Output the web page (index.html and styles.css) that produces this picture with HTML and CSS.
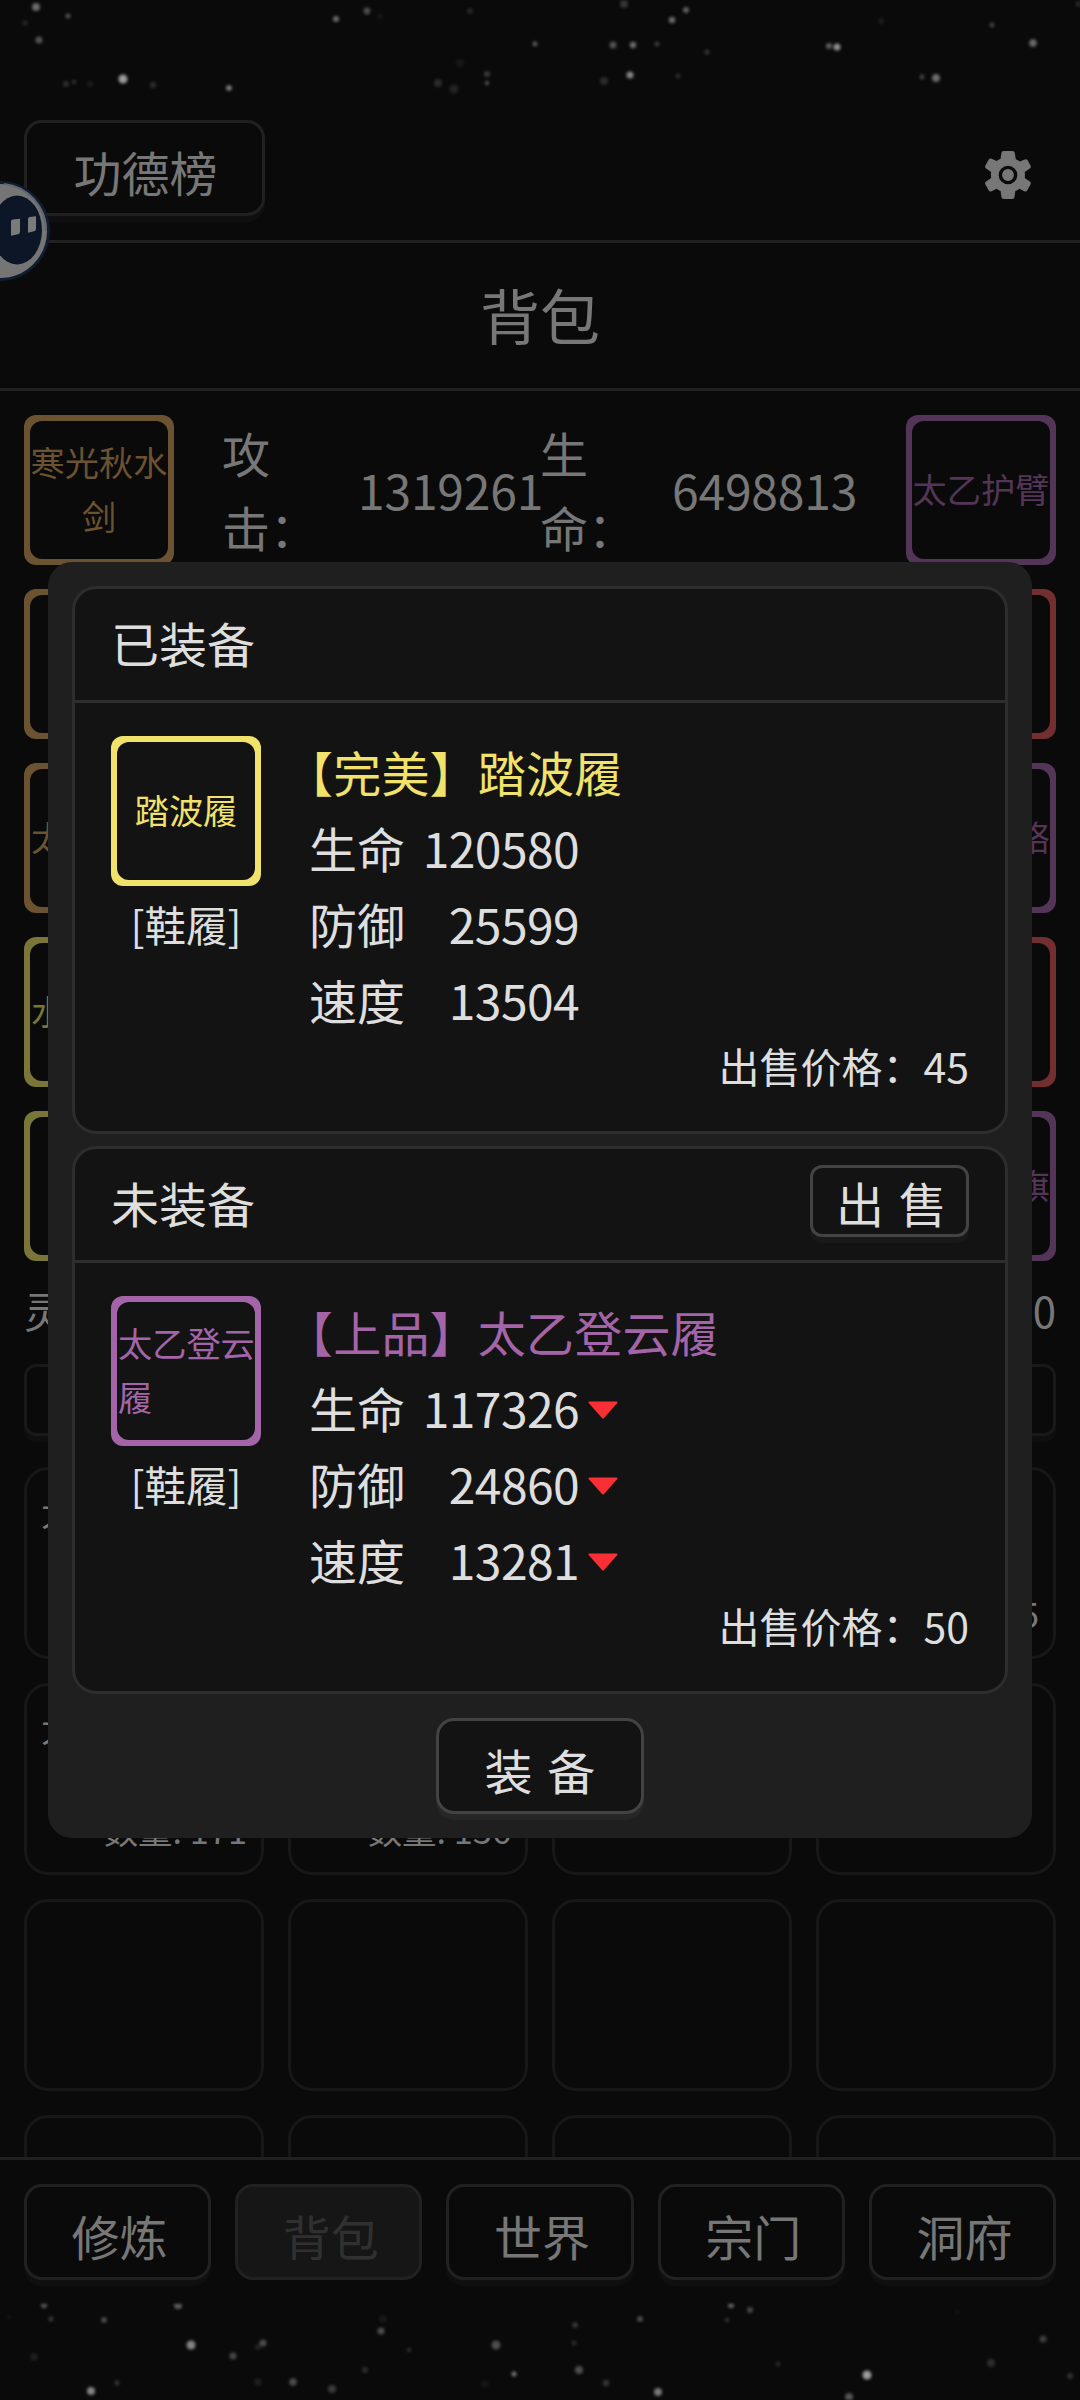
FILE: index.html
```html
<!DOCTYPE html>
<html lang="zh-CN">
<head>
<meta charset="utf-8">
<title>背包</title>
<link rel="stylesheet" href="styles.css">
</head>
<body>
<div class="app">
  <svg class="stars" width="1080" height="96" viewBox="0 0 1080 96" fill="#fff">
    <circle cx="36" cy="7" r="4" opacity=".4"/><circle cx="68" cy="16" r="2.5" opacity=".3"/><circle cx="25" cy="23" r="3" opacity=".1"/>
    <circle cx="39" cy="40" r="3.5" opacity=".3"/><circle cx="123" cy="79" r="4.5" opacity=".6"/><circle cx="66" cy="84" r="3" opacity=".15"/>
    <circle cx="74" cy="82" r="2" opacity=".2"/><circle cx="90" cy="84" r="3" opacity=".08"/><circle cx="153" cy="85" r="3" opacity=".15"/>
    <circle cx="229" cy="88" r="2.8" opacity=".5"/><circle cx="336" cy="19" r="3" opacity=".4"/><circle cx="367" cy="11" r="3.4" opacity=".28"/>
    <circle cx="380" cy="16" r="2.5" opacity=".07"/><circle cx="470" cy="11" r="3" opacity=".12"/><circle cx="535" cy="44" r="2.4" opacity=".35"/>
    <circle cx="460" cy="63" r="4" opacity=".06"/><circle cx="487" cy="74" r="3" opacity=".2"/><circle cx="487" cy="83" r="2" opacity=".35"/>
    <circle cx="438" cy="83" r="4" opacity=".14"/><circle cx="454" cy="89" r="4.5" opacity=".1"/><circle cx="613" cy="45" r="3.5" opacity=".3"/>
    <circle cx="633" cy="45" r="3.2" opacity=".4"/><circle cx="657" cy="44" r="2.5" opacity=".2"/><circle cx="630" cy="75" r="3.5" opacity=".5"/>
    <circle cx="604" cy="81" r="4" opacity=".14"/><circle cx="678" cy="76" r="2.5" opacity=".15"/><circle cx="624" cy="4" r="4" opacity=".18"/>
    <circle cx="686" cy="10" r="3" opacity=".35"/><circle cx="672" cy="20" r="3.2" opacity=".4"/><circle cx="707" cy="52" r="2.6" opacity=".18"/>
    <circle cx="829" cy="46" r="3" opacity=".35"/><circle cx="837" cy="47" r="3.5" opacity=".55"/><circle cx="881" cy="21" r="3" opacity=".08"/>
    <circle cx="992" cy="25" r="2.4" opacity=".25"/><circle cx="1033" cy="43" r="3.8" opacity=".4"/><circle cx="936" cy="78" r="4" opacity=".4"/>
    <circle cx="922" cy="77" r="2.4" opacity=".25"/><circle cx="1079" cy="4" r="3" opacity=".15"/>
  </svg>

  <header class="topbar">
    <button class="btn rank">功德榜</button>
    <svg class="gear" width="46" height="50" viewBox="0 0 46 50">
      <path d="M18.5 1h9q2 0 2.300 2l1 6.200q2 .8 4 2.300l5-2q2-.8 3 1l2.700 5q1 1.800-.7 3l-5 3.500q.3 3 0 6l5 3.500q1.700 1.200.7 3l-3.200 5.700q-1 1.800-3 1l-5-2.400q-1.800 1.500-4 2.300l-.8 6q-.3 2-2.300 2h-8.500q-2 0-2.300-2l-.8-6q-2.200-.8-4-2.300l-5 2.400q-2 .8-3-1l-3.200-5.700q-1-1.800.7-3l5-3.500q-.3-3 0-6l-5-3.500q-1.700-1.200-.7-3l3.200-5.700q1-1.800 3-1l5 2.200q1.800-1.400 4-2.200l.8-5.800q.3-2 2.100-2z" fill="#777"/>
      <circle cx="23" cy="25" r="7.600" fill="#777" stroke="#0a0a0a" stroke-width="3.400"/>
    </svg>
  </header>

  <div class="title">背包</div>

  <main class="main">
    <section class="equip">
      <div class="col">
        <div class="slot gold dim"><span>寒光秋水剑</span></div>
        <div class="slot gold dim"><span></span></div>
        <div class="slot gold dim"><span class="start">太</span></div>
        <div class="slot yellow dim"><span class="start">水</span></div>
        <div class="slot yellow dim"><span></span></div>
      </div>
      <div class="stats">
        <span class="label">攻击：</span><span class="value">1319261</span>
        <span class="label">生命：</span><span class="value">6498813</span>
      </div>
      <div class="col">
        <div class="slot purple dim"><span>太乙护臂</span></div>
        <div class="slot red dim"><span></span></div>
        <div class="slot purple dim"><span class="end">络</span></div>
        <div class="slot red dim"><span></span></div>
        <div class="slot purple dim"><span class="end">旗</span></div>
      </div>
    </section>
    <div class="coins"><span>灵石</span><span>0</span></div>
    <div class="filters"><button class="btn small"></button><button class="btn small"></button></div>
    <section class="bag">
      <div class="cell"><b>太</b></div><div class="cell"></div><div class="cell"></div><div class="cell"><i>5</i></div>
      <div class="cell"><b>太</b><i>数量: 171</i></div><div class="cell"><i>数量: 136</i></div><div class="cell"></div><div class="cell"></div>
      <div class="cell"></div><div class="cell"></div><div class="cell"></div><div class="cell"></div>
      <div class="cell"></div><div class="cell"></div><div class="cell"></div><div class="cell"></div>
    </section>
  </main>

  <nav class="nav">
    <button class="btn">修炼</button>
    <button class="btn active">背包</button>
    <button class="btn">世界</button>
    <button class="btn">宗门</button>
    <button class="btn">洞府</button>
  </nav>

  <svg class="stars" width="1080" height="96" viewBox="0 0 1080 96" fill="#fff">
    <circle cx="44" cy="1" r="3" opacity=".35"/><circle cx="178" cy="1" r="4" opacity=".35"/><circle cx="51" cy="15" r="2.500" opacity=".2"/>
    <circle cx="104" cy="16" r="2.800" opacity=".3"/><circle cx="9" cy="13" r="2" opacity=".06"/><circle cx="191" cy="41" r="4.500" opacity=".5"/>
    <circle cx="263" cy="39" r="3.500" opacity=".28"/><circle cx="258" cy="43" r="3" opacity=".1"/><circle cx="233" cy="52" r="3.500" opacity=".25"/>
    <circle cx="34" cy="53" r="4" opacity=".08"/><circle cx="381" cy="27" r="3.500" opacity=".28"/><circle cx="383" cy="15" r="4" opacity=".06"/>
    <circle cx="409" cy="46" r="2" opacity=".18"/><circle cx="496" cy="41" r="4.500" opacity=".28"/><circle cx="365" cy="66" r="3" opacity=".15"/>
    <circle cx="293" cy="78" r="3.800" opacity=".28"/><circle cx="332" cy="85" r="4" opacity=".2"/><circle cx="258" cy="78" r="4" opacity=".08"/>
    <circle cx="91" cy="87" r="4" opacity=".5"/><circle cx="117" cy="79" r="2.500" opacity=".18"/><circle cx="514" cy="70" r="2.500" opacity=".45"/>
    <circle cx="579" cy="66" r="4" opacity=".28"/><circle cx="575" cy="21" r="2.800" opacity=".2"/><circle cx="574" cy="39" r="2.500" opacity=".15"/>
    <circle cx="640" cy="15" r="2.800" opacity=".3"/><circle cx="606" cy="79" r="3.200" opacity=".18"/><circle cx="485" cy="80" r="3.500" opacity=".06"/>
    <circle cx="658" cy="88" r="4" opacity=".45"/><circle cx="731" cy="1" r="3" opacity=".4"/><circle cx="750" cy="6" r="3" opacity=".25"/>
    <circle cx="727" cy="16" r="2" opacity=".2"/><circle cx="778" cy="60" r="2.500" opacity=".12"/><circle cx="867" cy="71" r="4.500" opacity=".6"/>
    <circle cx="849" cy="93" r="4" opacity=".3"/><circle cx="991" cy="59" r="4.200" opacity=".14"/><circle cx="1043" cy="35" r="3.500" opacity=".22"/>
    <circle cx="1070" cy="72" r="3" opacity=".16"/><circle cx="957" cy="8" r="2" opacity=".06"/>
  </svg>

  <svg class="floater" width="52" height="104" viewBox="0 0 52 104">
    <circle cx="0" cy="52" r="48.500" fill="#757575" stroke="#101d30" stroke-width="3"/>
    <path d="M4 5A47 47 0 0 1 46 52" fill="none" stroke="#62676f" stroke-width="2"/>
    <ellipse cx="17" cy="51" rx="25" ry="34.500" fill="#0c1627"/>
    <path d="M11 42.500q0-2 2-2l7-.8v13q0 2-2 2.500l-7 1.600z" fill="#7a7c7b"/>
    <path d="M28 40q0-1.800 2-2l6-.8v12.500q0 2-2 2.500l-6 1.500z" fill="#7a7c7b"/>
  </svg>

  <div class="modal">
    <section class="card">
      <div class="card-head">已装备</div>
      <div class="card-body">
        <div class="side">
          <div class="slot yellow"><span>踏波履</span></div>
          <div class="tag">[鞋履]</div>
        </div>
        <div class="info">
          <div class="name yellow-text">【完美】踏波履</div>
          <div class="attr"><span>生命</span><span class="num">120580</span></div>
          <div class="attr"><span>防御</span><span class="num">25599</span></div>
          <div class="attr"><span>速度</span><span class="num">13504</span></div>
          <div class="price"><span>出售价格：</span><span>45</span></div>
        </div>
      </div>
    </section>
    <section class="card">
      <div class="card-head">未装备<button class="btn sell">出 售</button></div>
      <div class="card-body">
        <div class="side">
          <div class="slot purple"><span class="start">太乙登云履</span></div>
          <div class="tag">[鞋履]</div>
        </div>
        <div class="info">
          <div class="name purple-text">【上品】太乙登云履</div>
          <div class="attr"><span>生命</span><span class="num">117326</span><svg width="30" height="18" viewBox="0 0 30 18"><path d="M1 .5h28q1 .5.3 1.500L16 17q-1 1-2 0L.7 2Q0 1 1 .5z" fill="#fa2f36"/></svg></div>
          <div class="attr"><span>防御</span><span class="num">24860</span><svg width="30" height="18" viewBox="0 0 30 18"><path d="M1 .5h28q1 .5.3 1.500L16 17q-1 1-2 0L.7 2Q0 1 1 .5z" fill="#fa2f36"/></svg></div>
          <div class="attr"><span>速度</span><span class="num">13281</span><svg width="30" height="18" viewBox="0 0 30 18"><path d="M1 .5h28q1 .5.3 1.500L16 17q-1 1-2 0L.7 2Q0 1 1 .5z" fill="#fa2f36"/></svg></div>
          <div class="price"><span>出售价格：</span><span>50</span></div>
        </div>
      </div>
    </section>
    <button class="btn wear">装 备</button>
  </div>
</div>
</body>
</html>
```
FILE: styles.css
```css
* { box-sizing: border-box; }

body {
  margin: 0;
  background: #0a0a0a;
  font-family: "AR PL UKai CN", KaiTi, STKaiti, "Noto Sans CJK SC", sans-serif;
  font-size: 48px;
  color: #777;
}

.app {
  position: relative;
  width: 1080px;
  height: 2400px;
  overflow: hidden;
  display: flex;
  flex-direction: column;
}

.stars { display: block; flex: none; filter: blur(1.5px); }

.btn {
  display: flex;
  align-items: center;
  justify-content: center;
  margin: 0;
  padding: 5px 0 0 4px;
  height: 96px;
  border: 3px solid #212121;
  border-radius: 18px;
  background: #0a0a0a;
  box-shadow: 0 6px 0 #0f0f0f;
  color: #777;
  font: inherit;
  line-height: 1;
  white-space: pre;
}

.topbar {
  flex: none;
  height: 147px;
  padding: 24px 49px 0 24px;
  display: flex;
  justify-content: space-between;
  border-bottom: 3px solid #212121;
}
.rank { width: 241px; padding-left: 2px; }
.gear { margin-top: 30px; }

.title {
  flex: none;
  height: 148px;
  border-bottom: 3px solid #212121;
  font-size: 60px;
  line-height: 142px;
  text-align: center;
}

.main {
  flex: none;
  height: 1766px;
  overflow: hidden;
  padding: 24px 24px 0;
}

.equip { display: flex; justify-content: space-between; height: 846px; }
.col { display: flex; flex-direction: column; gap: 24px; }

/* Quality-coloured frame: the padding is the frame, the span is the inside. */
.slot {
  width: 150px;
  height: 150px;
  padding: 6px;
  border-radius: 12px;
  font-size: 34.2px;
  line-height: 54px;
}
.slot span {
  display: flex;
  align-items: center;
  justify-content: center;
  height: 138px;
  padding-bottom: 5px;
  border-radius: 12px;
  background: #131313;
  text-align: center;
  word-break: break-all;
}
.slot .start { text-align: left; justify-content: flex-start; padding-left: 1px; }
.slot .end { justify-content: flex-end; }
.slot.dim span { background: #0a0a0a; }
.slot.yellow { background: #f0e26b; color: #f0e26b; }
.slot.purple { background: #a365a8; color: #a365a8; }
.slot.gold.dim { background: #6b5231; color: #6b5231; }
.slot.yellow.dim { background: #7a7539; color: #7a7539; }
.slot.purple.dim { background: #533557; color: #533557; }
.slot.red.dim { background: #732f2f; color: #732f2f; }

.stats {
  flex: 1;
  height: 147px;
  display: grid;
  grid-template-columns: 136px 182px 132px 1fr;
  padding-left: 48px;
  align-items: center;
}
.label { width: 96px; line-height: 74px; }
.value { letter-spacing: -0.2px; }

.coins {
  display: flex;
  justify-content: space-between;
  height: 103px;
  line-height: 98px;
  font-size: 42px;
}
.filters { display: flex; gap: 24px; height: 103px; }
.small { flex: 1; height: 72px; border-radius: 12px; border-color: #191919; }

.bag {
  display: grid;
  grid-template-columns: repeat(4, 1fr);
  grid-auto-rows: 192px;
  gap: 24px;
}
.cell {
  display: flex;
  flex-direction: column;
  padding: 16px 14px 18px;
  border: 3px solid #171717;
  border-radius: 24px;
  font-size: 34.4px;
  line-height: 50px;
}
.cell b { font-weight: normal; }
.cell i { font-style: normal; margin-top: auto; text-align: right; }

.nav {
  flex: none;
  height: 147px;
  padding: 24px 24px 0;
  display: grid;
  grid-template-columns: repeat(5, 1fr);
  gap: 24px;
  border-top: 3px solid #212121;
}
.nav .active { background: #161616; color: #303030; box-shadow: none; }

/* System bubble parked on the screen edge, above the page. */
.floater { position: absolute; left: 0; top: 179px; }

.modal {
  position: absolute;
  left: 48px;
  top: 562px;
  width: 984px;
  height: 1276px;
  padding: 24px;
  border-radius: 24px;
  background: #1f1f1f;
  color: #dedede;
  display: flex;
  flex-direction: column;
  align-items: center;
  gap: 12px;
}
.card {
  flex: none;
  width: 936px;
  height: 548px;
  border: 3px solid #2d2d2d;
  border-radius: 24px;
  background: #131313;
}
.card-head {
  height: 114px;
  padding: 0 36px 6px;
  display: flex;
  align-items: center;
  justify-content: space-between;
  border-bottom: 3px solid #2d2d2d;
}
.modal .btn { border-color: #434343; background: #131313; color: #dedede; word-spacing: 4px; }
.modal .sell { width: 159px; height: 72px; padding-top: 2px; margin-top: -2px; border-radius: 12px; box-shadow: 0 6px 0 #191919; }
.modal .wear { width: 208px; margin-top: 12px; padding-left: 0; box-shadow: 0 6px 0 #262626; }

.card-body { display: flex; padding: 33px 36px 0; }
.side { width: 150px; }
.tag { margin-top: 7px; text-align: center; font-size: 41.5px; line-height: 62px; }
.info { flex: 1; padding-left: 48px; }
.name { margin: -3px 0 3px -24px; line-height: 76px; letter-spacing: 0.2px; }
.yellow-text { color: #f0e26b; }
.purple-text { color: #a365a8; }
.attr { display: flex; align-items: center; height: 76px; }
.attr span { margin-top: -6px; }
.attr .num { width: 174px; text-align: right; letter-spacing: -0.6px; }
.attr svg { margin-left: 9px; }
.price {
  display: flex;
  justify-content: flex-end;
  font-size: 41px;
  line-height: 50px;
}
```
